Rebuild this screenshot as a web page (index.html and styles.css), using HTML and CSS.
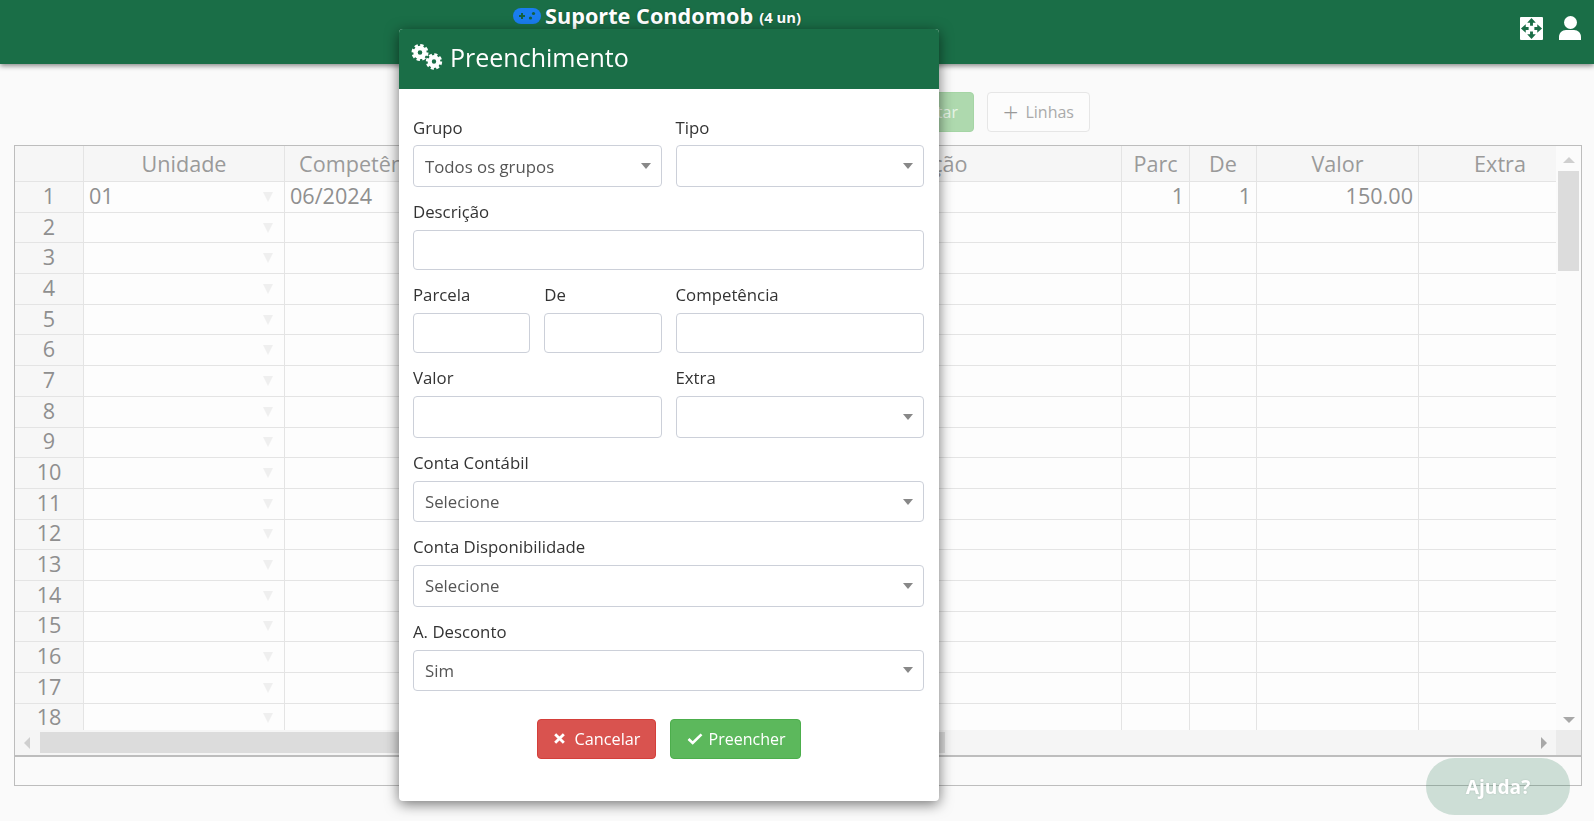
FILE: index.html
```html
<!DOCTYPE html>
<html lang="pt-BR">
<head>
<meta charset="utf-8">
<title>Suporte Condomob</title>
<link rel="stylesheet" href="styles.css">
</head>
<body>
<header class="topbar">
  <div class="brand">
    <svg class="pad-icon" viewBox="0 0 28 16" aria-hidden="true"><rect width="28" height="16" rx="8" fill="#1a7df0"/><path d="M6 7h2V5h2v2h2v2h-2v2H8V9H6z" fill="#14603f"/><circle cx="20.5" cy="5.5" r="1.6" fill="#14603f"/><circle cx="17.5" cy="10" r="1.6" fill="#14603f"/></svg>
    <span class="brand-name">Suporte Condomob</span>
    <span class="brand-count">(4 un)</span>
  </div>
  <div class="top-actions">
    <svg class="expand-icon" viewBox="0 0 24 24" aria-hidden="true"><rect width="24" height="24" rx="1" fill="#fff"/><path d="M12 1l4.500 5h-3v3h-3V6h-3zM12 23l4.500-5h-3v-3h-3v3h-3zM1 12l5-4.500v3h3v3H6v3zM23 12l-5-4.500v3h-3v3h3v3z" fill="#1a6e47"/></svg>
    <svg class="user-icon" viewBox="0 0 22 24" aria-hidden="true"><circle cx="11.500" cy="6.500" r="6.500" fill="#fff"/><path d="M0 24v-3c0-4 3-7 7-7h8c4 0 7 3 7 7v3z" fill="#fff"/></svg>
  </div>
</header>

<main class="page">
  <div class="toolbar">
    <button class="tool-btn tool-green">Importar</button>
    <button class="tool-btn tool-plain"><span class="plus">+</span>Linhas</button>
  </div>

  <section class="sheet">
    <div class="sheet-main">
      <div class="cells">
        <div class="row head"><div class="c">&nbsp;</div><div class="c">Unidade</div><div class="c">Competência</div><div class="c"></div><div class="c">Descrição</div><div class="c">Parc</div><div class="c">De</div><div class="c">Valor</div><div class="c">Extra</div></div>
        <div class="row"><div class="c n">1</div><div class="c dd">01</div><div class="c">06/2024</div><div class="c"></div><div class="c"></div><div class="c r">1</div><div class="c r">1</div><div class="c r">150.00</div><div class="c"></div></div>
        <div class="row"><div class="c n">2</div><div class="c dd"></div><div class="c"></div><div class="c"></div><div class="c"></div><div class="c"></div><div class="c"></div><div class="c"></div><div class="c"></div></div>
        <div class="row"><div class="c n">3</div><div class="c dd"></div><div class="c"></div><div class="c"></div><div class="c"></div><div class="c"></div><div class="c"></div><div class="c"></div><div class="c"></div></div>
        <div class="row"><div class="c n">4</div><div class="c dd"></div><div class="c"></div><div class="c"></div><div class="c"></div><div class="c"></div><div class="c"></div><div class="c"></div><div class="c"></div></div>
        <div class="row"><div class="c n">5</div><div class="c dd"></div><div class="c"></div><div class="c"></div><div class="c"></div><div class="c"></div><div class="c"></div><div class="c"></div><div class="c"></div></div>
        <div class="row"><div class="c n">6</div><div class="c dd"></div><div class="c"></div><div class="c"></div><div class="c"></div><div class="c"></div><div class="c"></div><div class="c"></div><div class="c"></div></div>
        <div class="row"><div class="c n">7</div><div class="c dd"></div><div class="c"></div><div class="c"></div><div class="c"></div><div class="c"></div><div class="c"></div><div class="c"></div><div class="c"></div></div>
        <div class="row"><div class="c n">8</div><div class="c dd"></div><div class="c"></div><div class="c"></div><div class="c"></div><div class="c"></div><div class="c"></div><div class="c"></div><div class="c"></div></div>
        <div class="row"><div class="c n">9</div><div class="c dd"></div><div class="c"></div><div class="c"></div><div class="c"></div><div class="c"></div><div class="c"></div><div class="c"></div><div class="c"></div></div>
        <div class="row"><div class="c n">10</div><div class="c dd"></div><div class="c"></div><div class="c"></div><div class="c"></div><div class="c"></div><div class="c"></div><div class="c"></div><div class="c"></div></div>
        <div class="row"><div class="c n">11</div><div class="c dd"></div><div class="c"></div><div class="c"></div><div class="c"></div><div class="c"></div><div class="c"></div><div class="c"></div><div class="c"></div></div>
        <div class="row"><div class="c n">12</div><div class="c dd"></div><div class="c"></div><div class="c"></div><div class="c"></div><div class="c"></div><div class="c"></div><div class="c"></div><div class="c"></div></div>
        <div class="row"><div class="c n">13</div><div class="c dd"></div><div class="c"></div><div class="c"></div><div class="c"></div><div class="c"></div><div class="c"></div><div class="c"></div><div class="c"></div></div>
        <div class="row"><div class="c n">14</div><div class="c dd"></div><div class="c"></div><div class="c"></div><div class="c"></div><div class="c"></div><div class="c"></div><div class="c"></div><div class="c"></div></div>
        <div class="row"><div class="c n">15</div><div class="c dd"></div><div class="c"></div><div class="c"></div><div class="c"></div><div class="c"></div><div class="c"></div><div class="c"></div><div class="c"></div></div>
        <div class="row"><div class="c n">16</div><div class="c dd"></div><div class="c"></div><div class="c"></div><div class="c"></div><div class="c"></div><div class="c"></div><div class="c"></div><div class="c"></div></div>
        <div class="row"><div class="c n">17</div><div class="c dd"></div><div class="c"></div><div class="c"></div><div class="c"></div><div class="c"></div><div class="c"></div><div class="c"></div><div class="c"></div></div>
        <div class="row row-last"><div class="c n">18</div><div class="c dd"></div><div class="c"></div><div class="c"></div><div class="c"></div><div class="c"></div><div class="c"></div><div class="c"></div><div class="c"></div></div>
      </div>
      <div class="vscroll">
        <div class="v-btn"><span class="tri-up"></span></div>
        <div class="v-thumb"></div>
        <div class="v-fill"></div>
        <div class="v-btn v-btn-end"><span class="tri-down"></span></div>
      </div>
    </div>
    <div class="hscroll">
      <div class="h-track">
        <span class="tri-left"></span>
        <div class="h-thumb"></div>
        <span class="tri-right"></span>
      </div>
      <div class="corner"></div>
    </div>
    <div class="sheet-foot"></div>
  </section>
</main>

<button class="help-pill">Ajuda?</button>

<div class="modal">
  <div class="modal-head">
    <svg class="gears-icon" viewBox="0 0 32 26" aria-hidden="true">
      <circle cx="9" cy="8.500" r="4.500" fill="none" stroke="#fff" stroke-width="4.400"/>
      <circle cx="9" cy="8.500" r="7.300" fill="none" stroke="#fff" stroke-width="2.400" stroke-dasharray="3.400 2.330"/>
      <circle cx="23" cy="17.500" r="4.300" fill="none" stroke="#fff" stroke-width="4.200"/>
      <circle cx="23" cy="17.500" r="7" fill="none" stroke="#fff" stroke-width="2.400" stroke-dasharray="3.200 2.300"/>
    </svg>
    <h2 class="modal-title">Preenchimento</h2>
  </div>
  <form class="modal-body">
    <div class="form-grid">
      <div class="field span2 first"><label>Grupo</label><div class="select">Todos os grupos</div></div>
      <div class="field span2 first"><label>Tipo</label><div class="select"></div></div>
      <div class="field span4"><label>Descrição</label><input class="input" type="text"></div>
      <div class="field"><label>Parcela</label><input class="input" type="text"></div>
      <div class="field"><label>De</label><input class="input" type="text"></div>
      <div class="field span2"><label>Competência</label><input class="input" type="text"></div>
      <div class="field span2"><label>Valor</label><input class="input input-tall" type="text"></div>
      <div class="field span2"><label>Extra</label><div class="select"></div></div>
      <div class="field span4"><label>Conta Contábil</label><div class="select select-wide">Selecione</div></div>
      <div class="field span4"><label>Conta Disponibilidade</label><div class="select select-wide">Selecione</div></div>
      <div class="field span4"><label>A. Desconto</label><div class="select select-wide">Sim</div></div>
    </div>
    <div class="actions">
      <button type="button" class="btn btn-cancel"><svg class="btn-icon" viewBox="0 0 12 12" aria-hidden="true"><path d="M2 2l8 8M10 2l-8 8" stroke="#fff" stroke-width="2.600"/></svg>Cancelar</button>
      <button type="button" class="btn btn-fill"><svg class="btn-icon btn-icon-wide" viewBox="0 0 16 12" aria-hidden="true"><path d="M1.500 6.500l4.200 4L14.500 1.800" fill="none" stroke="#fff" stroke-width="2.600"/></svg>Preencher</button>
    </div>
  </form>
</div>
</body>
</html>
```

FILE: styles.css
```css
* { box-sizing: border-box; }
html, body { margin: 0; height: 100%; overflow: hidden; }
body { background: #fafafa; font-family: "Open Sans", sans-serif; color: #333; }
button { font-family: inherit; }

.topbar { height: 64px; background: #1a6e47; box-shadow: 0 2px 5px rgba(0,0,0,.45); display: flex; position: relative; }
.brand { margin-left: 513px; height: 31px; display: flex; align-items: center; color: #fff; font-weight: 700; text-shadow: 0 0 2px rgba(0,0,0,.35); }
.pad-icon { width: 28px; height: 16px; margin-right: 4px; }
.brand-name { font-size: 21.700px; }
.brand-count { font-size: 14.800px; margin-left: 6px; padding-top: 3px; }
.top-actions { margin-left: auto; margin-right: 13px; height: 56px; display: flex; align-items: center; gap: 16px; }
.expand-icon { width: 23px; height: 23px; display: block; }
.user-icon { width: 22px; height: 24px; display: block; }

.toolbar { padding: 28px 504px 0 0; display: flex; justify-content: flex-end; gap: 13px; }
.tool-btn { height: 40px; border-radius: 4px; font-size: 16px; padding: 0; }
.tool-green { width: 113px; background: #aed9ae; border: 1px solid #a5d5a5; color: #e8f5e8; text-align: right; padding-right: 15px; }
.tool-plain { width: 103px; background: #fcfcfc; border: 1px solid #e6e6e6; color: #aaa; display: flex; align-items: center; justify-content: center; }
.plus { font-size: 27px; line-height: 24px; font-weight: 300; margin-right: 7px; color: #999; }

.sheet { margin: 13px 12px 0 14px; border: 1px solid #bdbdbd; }
.sheet-main { display: flex; height: 584px; }
.cells { flex: 1; overflow: hidden; min-width: 0; }
.row { display: grid; grid-template-columns: 69px 201px 162px 269px 406px 68px 67px 162px 163px; height: 30.700px; font-size: 21.600px; line-height: 24px; color: #8f8f8f; }
.row.head { height: 36px; background: #f6f6f6; text-align: center; color: #9a9a9a; }
.row-last { height: 26px; }
.row-last .c { border-bottom: 0; padding-top: 1px; padding-bottom: 0; }
.c { border-right: 1px solid #e4e4e4; border-bottom: 1px solid #e4e4e4; padding: 0 5px 2px; display: flex; align-items: center; white-space: nowrap; overflow: hidden; background: #fdfdfd; min-width: 0; }
.head .c { background: #f6f6f6; justify-content: center; padding-bottom: 0; }
.c.n { background: #f7f7f7; justify-content: center; }
.c.r { justify-content: flex-end; }
.c.dd { padding-right: 11px; }
.c.dd::after { content: ""; margin-left: auto; margin-top: 2px; border-left: 5px solid transparent; border-right: 5px solid transparent; border-top: 10px solid #efefef; }

.vscroll { width: 25px; flex: none; display: flex; flex-direction: column; background: #fbfbfb; }
.v-btn { height: 25px; flex: none; display: flex; justify-content: center; padding-top: 11px; }
.v-btn-end { padding-top: 12px; }
.tri-up { width: 0; height: 0; border-left: 6px solid transparent; border-right: 6px solid transparent; border-bottom: 6px solid #cfcfcf; }
.tri-down { width: 0; height: 0; border-left: 6px solid transparent; border-right: 6px solid transparent; border-top: 6px solid #a8a8a8; }
.v-thumb { height: 100px; flex: none; margin: 0 2px; background: #dcdcdc; }
.v-fill { flex: 1; }

.hscroll { display: flex; height: 25px; }
.h-track { flex: 1; display: flex; align-items: center; background: #f5f5f5; }
.tri-left { width: 0; height: 0; margin-left: 9px; border-top: 6px solid transparent; border-bottom: 6px solid transparent; border-right: 6px solid #cfcfcf; }
.h-thumb { width: 905px; height: 21px; margin-left: 10px; background: #dcdcdc; }
.tri-right { width: 0; height: 0; margin-left: auto; margin-right: 9px; border-top: 6px solid transparent; border-bottom: 6px solid transparent; border-left: 6px solid #a8a8a8; }
.corner { width: 25px; background: #ebebeb; }
.sheet-foot { height: 30px; border-top: 2px solid #bdbdbd; }

.help-pill { position: fixed; left: 1426px; top: 758px; width: 144px; height: 57px; border: 0; border-radius: 29px; background: rgba(26,110,71,.2); color: #fff; font-size: 19.200px; font-weight: 700; text-shadow: 0 0 2px rgba(0,0,0,.15); }

.modal { position: fixed; left: 399px; top: 29px; width: 540px; height: 772px; background: #fff; border-radius: 4px; box-shadow: 0 3px 14px rgba(0,0,0,.55); overflow: hidden; }
.modal-head { height: 60px; background: #1a6e47; display: flex; align-items: center; padding: 0 0 5px 12px; color: #fff; }
.gears-icon { width: 32px; height: 26px; margin-right: 7px; }
.modal-title { margin: 0; font-size: 25px; font-weight: 400; }
.modal-body { padding: 13px 15px 0 14px; }
.form-grid { display: grid; grid-template-columns: repeat(4, 1fr); column-gap: 14px; }
.field { min-width: 0; }
.span2 { grid-column: span 2; }
.span4 { grid-column: span 4; }
.field label { display: block; padding-top: 14px; margin-bottom: 8px; line-height: 21px; font-size: 16.800px; color: #333; }
.first label { padding-top: 15px; margin-bottom: 7px; }
.input { display: block; width: 100%; height: 40px; border: 1px solid #ccd0d9; border-radius: 4px; background: #fff; outline: 0; }
.input-tall { height: 42px; }
.select { height: 42px; border: 1px solid #ccd0d9; border-radius: 4px; display: flex; align-items: center; padding: 0 10px 0 11px; font-size: 16.800px; color: #555; }
.select-wide { height: 41.300px; }
.select::after { content: ""; margin-left: auto; border-left: 5px solid transparent; border-right: 5px solid transparent; border-top: 6px solid #888; }
.actions { margin-top: 28px; display: flex; justify-content: center; gap: 14px; }
.btn { height: 40px; border-radius: 4px; color: #fff; padding: 0 0 0 2px; display: flex; align-items: center; justify-content: center; }
.btn-cancel { width: 119px; font-size: 16.300px; background: #d9534f; border: 1px solid #d43f3a; }
.btn-fill { width: 131px; font-size: 16px; background: #5cb85c; border: 1px solid #4cae4c; }
.btn-icon { width: 13px; height: 13px; margin-right: 8px; }
.btn-icon-wide { width: 16px; margin-right: 6px; }
```
